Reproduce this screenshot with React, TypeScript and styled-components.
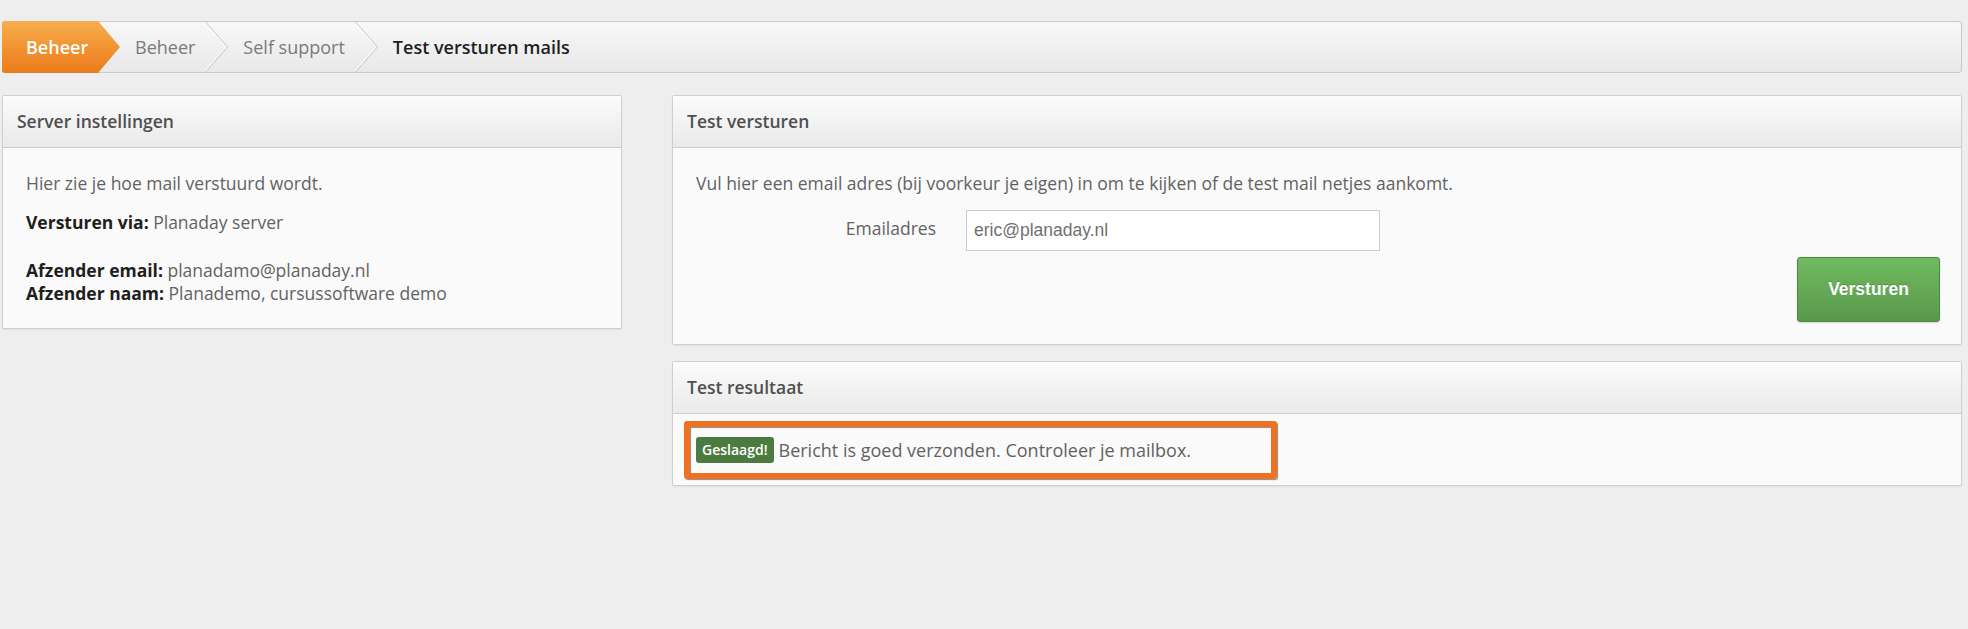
import React from 'react';
import styled, { createGlobalStyle } from 'styled-components';

const GlobalStyle = createGlobalStyle`
  html, body { margin: 0; padding: 0; }
  body {
    background: #eeeeee;
    font-family: "Open Sans", "Noto Sans", sans-serif;
    font-size: 17.5px;
    color: #626262;
  }
  * { box-sizing: border-box; }
`;

const Page = styled.div`
  padding: 21px 6px 40px 2px;
`;

const Breadcrumb = styled.nav`
  display: flex;
  align-items: stretch;
  height: 52px;
  border: 1px solid #c9c9c9;
  border-radius: 3px;
  background: linear-gradient(#f8f8f8, #e8e8e8);
  font-size: 18px;
`;

const HomeCrumb = styled.span`
  display: flex;
  align-items: center;
  width: 118px;
  margin: -1px 0 -1px -1px;
  padding-left: 24px;
  background: linear-gradient(#f7ae4c, #ec7a1a);
  clip-path: polygon(0 0, 96px 0, 118px 50%, 96px 100%, 0 100%);
  border-radius: 3px 0 0 3px;
  color: #ffffff;
  font-weight: 600;
`;

const Crumb = styled.span<{ $current?: boolean }>`
  display: flex;
  align-items: center;
  padding: 0 10px 0 15px;
  color: ${(p) => (p.$current ? '#1e1e1e' : '#7a7a7a')};
  font-weight: ${(p) => (p.$current ? 600 : 400)};
  white-space: nowrap;
`;

const SepSvg = styled.svg`
  flex: none;
  display: block;
`;

const Separator = () => (
  <SepSvg width="23" height="50" viewBox="0 0 23 50">
    <polyline points="0,0 22,25 0,50" fill="none" stroke="#ffffff" strokeWidth="1" transform="translate(-1,0)" />
    <polyline points="0.5,0 22.5,25 0.5,50" fill="none" stroke="#c6c6c6" strokeWidth="1" />
  </SepSvg>
);

const Columns = styled.div`
  display: grid;
  grid-template-columns: 620px 1fr;
  column-gap: 50px;
  margin-top: 22px;
  align-items: start;
`;

const Stack = styled.div`
  display: flex;
  flex-direction: column;
  gap: 16px;
`;

const Panel = styled.section`
  border: 1px solid #cfcfcf;
  border-radius: 2px;
  background: #fafafa;
  box-shadow: 0 1px 2px rgba(0, 0, 0, 0.06);
`;

const PanelHeader = styled.h3`
  margin: 0;
  height: 52px;
  line-height: 50px;
  padding-left: 14px;
  border-bottom: 1px solid #cccccc;
  background: linear-gradient(#fbfbfb, #eaeaea);
  font-size: 17.5px;
  font-weight: 600;
  color: #4f4f4f;
`;

const PanelBody = styled.div<{ $pad: string }>`
  padding: ${(p) => p.$pad};
  display: flex;
  flex-direction: column;
`;

const Line = styled.p<{ $gap?: number }>`
  margin: 0;
  margin-top: ${(p) => p.$gap ?? 0}px;
  line-height: 23px;
  white-space: nowrap;
`;

const Label = styled.b`
  font-weight: 700;
  color: #1e1e1e;
`;

const FormRow = styled.div`
  display: grid;
  grid-template-columns: 240px 414px;
  column-gap: 30px;
  align-items: center;
  margin-top: 15px;
`;

const FieldLabel = styled.label`
  text-align: right;
  line-height: 23px;
  padding-bottom: 4px;
`;

const TextInput = styled.input`
  height: 41px;
  width: 414px;
  border: 1px solid #cccccc;
  background: #ffffff;
  padding: 0 0 0 7px;
  font-family: "Liberation Sans", Arial, sans-serif;
  font-size: 17.5px;
  color: #707070;
  outline: none;
`;

const SendButton = styled.button`
  align-self: flex-end;
  margin-top: 6px;
  width: 143px;
  height: 65px;
  border: 1px solid #4e8642;
  border-radius: 3px;
  background: linear-gradient(#70bb60, #5a984b);
  color: #ffffff;
  font-family: "Liberation Sans", Arial, sans-serif;
  font-weight: 700;
  font-size: 17.5px;
  text-shadow: 0 -1px 0 rgba(0, 0, 0, 0.2);
  box-shadow: 0 1px 2px rgba(0, 0, 0, 0.15);
`;

const Highlight = styled.div`
  width: 593px;
  height: 58px;
  border: 6px solid #ee7220;
  border-radius: 3px;
  display: flex;
  align-items: center;
  padding-left: 6px;
  font-size: 18px;
  box-shadow: 1px 1px 1px rgba(0, 0, 0, 0.45), inset 1px 1px 1px rgba(0, 0, 0, 0.45);
  white-space: nowrap;
`;

const Badge = styled.span`
  display: inline-block;
  height: 26px;
  line-height: 26px;
  padding: 0 6px;
  border-radius: 3px;
  background: #4b7b3f;
  color: #ffffff;
  font-size: 14px;
  font-weight: 600;
  margin-right: 5px;
`;

export default function App() {
  return (
    <>
      <GlobalStyle />
      <Page>
        <Breadcrumb>
          <HomeCrumb>Beheer</HomeCrumb>
          <Crumb>Beheer</Crumb>
          <Separator />
          <Crumb>Self support</Crumb>
          <Separator />
          <Crumb $current>Test versturen mails</Crumb>
        </Breadcrumb>
        <Columns>
          <Panel>
            <PanelHeader>Server instellingen</PanelHeader>
            <PanelBody $pad="24px 21px 23px 23px">
              <Line>Hier zie je hoe mail verstuurd wordt.</Line>
              <Line $gap={16}>
                <Label>Versturen via:</Label> Planaday server
              </Line>
              <Line $gap={25}>
                <Label>Afzender email:</Label> planadamo@planaday.nl
              </Line>
              <Line>
                <Label>Afzender naam:</Label> Planademo, cursussoftware demo
              </Line>
            </PanelBody>
          </Panel>
          <Stack>
            <Panel>
              <PanelHeader>Test versturen</PanelHeader>
              <PanelBody $pad="24px 21px 22px 23px">
                <Line>Vul hier een email adres (bij voorkeur je eigen) in om te kijken of de test mail netjes aankomt.</Line>
                <FormRow>
                  <FieldLabel htmlFor="email">Emailadres</FieldLabel>
                  <TextInput id="email" type="text" defaultValue="eric@planaday.nl" />
                </FormRow>
                <SendButton type="button">Versturen</SendButton>
              </PanelBody>
            </Panel>
            <Panel>
              <PanelHeader>Test resultaat</PanelHeader>
              <PanelBody $pad="7px 0 6px 11px">
                <Highlight>
                  <Badge>Geslaagd!</Badge>
                  Bericht is goed verzonden. Controleer je mailbox.
                </Highlight>
              </PanelBody>
            </Panel>
          </Stack>
        </Columns>
      </Page>
    </>
  );
}
